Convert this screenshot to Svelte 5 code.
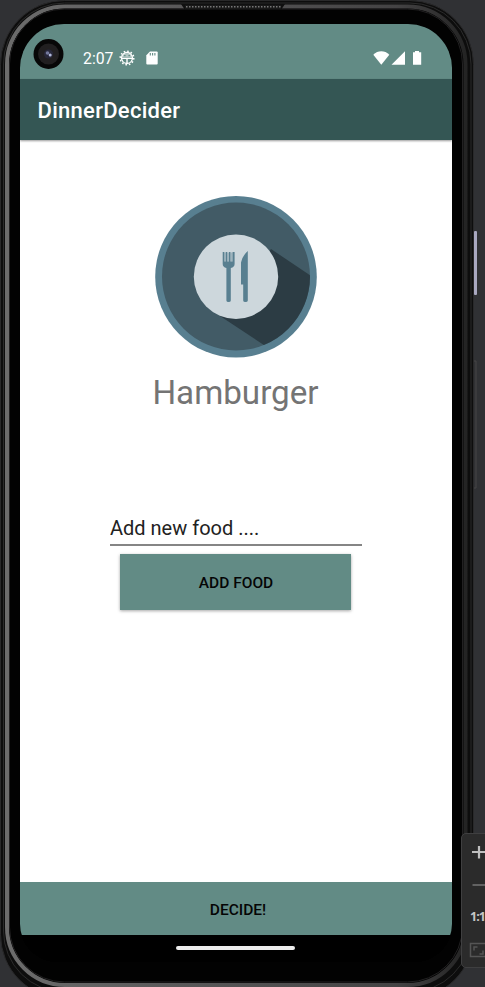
<script>
  const food = 'Hamburger';
  let entry = $state('Add new food ....');
</script>

<div class="stage">
  <svg class="frame" width="485" height="987" viewBox="0 0 485 987" aria-hidden="true">
    <defs>
      <linearGradient id="rim" x1="0" y1="0" x2="1" y2="0">
        <stop offset="0" stop-color="#6c6c6c" />
        <stop offset="0.35" stop-color="#5b5a5b" />
        <stop offset="0.85" stop-color="#444344" />
        <stop offset="1" stop-color="#242424" />
      </linearGradient>
      <pattern id="mesh" width="3" height="3" patternUnits="userSpaceOnUse">
        <rect width="3" height="3" fill="#191919" />
        <rect width="1.5" height="1.5" fill="#777" />
      </pattern>
    </defs>
    <rect x="0.5" y="0.5" width="473" height="998" rx="64" fill="#0d0d0d" stroke="#29292a" />
    <rect x="3.5" y="3" width="467.5" height="989" rx="61" fill="none" stroke="#2b2b2b" />
    <rect x="7" y="6.5" width="458.5" height="978.5" rx="58" fill="#030303" stroke="url(#rim)" stroke-width="4" />
    <rect x="9.5" y="9" width="453" height="973" rx="55" fill="#020202" stroke="#222122" />
    <path d="M181 4H285L281 10H185Z" fill="#101010" />
    <rect x="185" y="5" width="96" height="4" fill="url(#mesh)" />
    <rect x="474" y="231" width="3" height="64" rx="1" fill="#a9a8c0" />
    <path d="M474 361H476V488H474" fill="none" stroke="#474747" />
  </svg>

  <main class="screen">
    <header class="status">
      <span class="camera">
        <svg width="32" height="32" viewBox="0 0 32 32">
          <circle cx="16.5" cy="16" r="15" fill="#070707" />
          <circle cx="16.5" cy="16" r="10.5" fill="#211f20" />
          <circle cx="16.5" cy="16" r="4.5" fill="#28283a" />
          <circle cx="15.5" cy="15" r="1.8" fill="#74799c" />
          <circle cx="18.2" cy="17" r="1.5" fill="#b1b9db" />
        </svg>
      </span>
      <span class="clock">2:07</span>
      <svg class="bug" width="16" height="16" viewBox="0 0 16 16">
        <circle cx="8" cy="8" r="5.5" fill="none" stroke="#fff" stroke-width="1.3" />
        <circle cx="8" cy="8" r="6.8" fill="none" stroke="#fff" stroke-width="1.5" stroke-dasharray="1.6 1.96" />
        <path d="M3 7.4V5.6L5 3.5H11L13 5.6V7.4Z" fill="#fff" fill-opacity=".5" />
        <path d="M2.5 8.4H13.5M8 8V13.5" fill="none" stroke="#fff" stroke-width="1.4" />
        <path d="M5 5.7H6.6M9.4 5.7H11" stroke="#628b85" stroke-width="1.3" />
        <path d="M3.8 9.8H6.6V12.2H5.4ZM9.4 9.8H12.2L10.6 12.2H9.4Z" fill="#628b85" />
      </svg>
      <svg class="card" width="12" height="14" viewBox="0 0 12 14">
        <path d="M4 .5H10.7Q11.7 .5 11.7 1.5V12.5Q11.7 13.5 10.7 13.5H1.3Q.3 13.5 .3 12.5V4.2Z" fill="#fff" />
        <path d="M4.3 2V4.5M6.6 2V4.5M8.9 2V4.5" stroke="#628b85" stroke-width="1.1" />
      </svg>
      <span class="signals">
        <svg width="50" height="14" viewBox="0 0 50 14">
          <path d="M.3 3.8C4.8-.8 11.8-.8 16.3 3.8L8.3 13.8Z" fill="#fff" />
          <path d="M18.5 13.7L32 .3V13.7Z" fill="#fff" />
          <path d="M42 0H46V1.2H48.2V13.7H40V1.2H42Z" fill="#fff" />
        </svg>
      </span>
    </header>
    <div class="appbar">DinnerDecider</div>

    <section class="content">
      <svg class="logo" width="164" height="164" viewBox="0 0 164 164">
        <defs>
          <clipPath id="plate"><circle cx="82" cy="81.5" r="74" /></clipPath>
        </defs>
        <circle cx="82" cy="81.7" r="80.8" fill="#587f90" />
        <circle cx="82" cy="81.5" r="74" fill="#425b66" />
        <path d="M117 54L166 87V166H134L66 121Z" fill="#2c3c44" clip-path="url(#plate)" />
        <circle cx="82" cy="81.7" r="42.2" fill="#cdd7dc" />
        <path d="M68.7 57H70.3V66.5H71.8V57H73.2V66.5H75V57H76.4V66.5H78.6V57H80.6V69Q80.6 72 76.8 73V105.5Q76.8 107 74.6 107Q72.4 107 72.4 105.5V73Q68.7 72 68.7 69Z" fill="#587f90" />
        <path d="M70.3 57.5H71.8V66.5H70.3ZM73.2 57.5H75V66.5H73.2ZM76.4 57.5H78.6V66.5H76.4Z" fill="#587f90" fill-opacity=".4" />
        <path d="M93.8 56V105.5Q93.8 107 91.4 107Q89.2 107 89.2 105.5V89.5H87V67.5Q88.5 60.5 93.8 56Z" fill="#587f90" />
      </svg>
      <h1>{food}</h1>
      <input aria-label="New food" bind:value={entry} />
      <button class="add">ADD FOOD</button>
    </section>

    <button class="decide">DECIDE!</button>
    <footer><i></i></footer>
  </main>

  <aside class="tools">
    <svg width="23" height="132" viewBox="0 0 23 132">
      <path d="M10 18H23M17 12V24.5" stroke="#bfbfbf" stroke-width="2.2" />
      <path d="M10.5 51H23" stroke="#626262" stroke-width="2" />
      <rect x="8.5" y="109.5" width="22" height="13" fill="none" stroke="#555" stroke-width="1.5" />
      <path d="M12 116.5V113H15.5M17.5 120H21V116.5" fill="none" stroke="#555" stroke-width="1.5" />
    </svg>
    <span>1:1</span>
  </aside>
</div>

<style>
  :global(body) { margin: 0; background: #303134; }
  .stage {
    position: relative;
    width: 485px;
    height: 987px;
    overflow: hidden;
    background: #303134;
    font-family: Roboto, 'Liberation Sans', sans-serif;
  }
  .frame { position: absolute; inset: 0; }
  .screen {
    position: relative;
    display: flex;
    flex-direction: column;
    width: 432px;
    height: 938px;
    margin: 0 0 0 20px;
    top: 24px;
    border-radius: 44px 44px 38px 38px;
    overflow: hidden;
    background: #000;
  }
  .status {
    display: flex;
    align-items: center;
    height: 55px;
    flex: none;
    box-sizing: border-box;
    padding: 13px 29px 0 12px;
    background: #628b85;
    color: #fff;
  }
  .camera { height: 32px; margin-top: -9px; }
  .clock { margin-left: 19px; width: 36px; font-size: 15.8px; line-height: 20px; padding-top: 1px; }
  .bug { margin-left: 0; }
  .card { margin-left: 11px; }
  .signals { margin-left: auto; height: 14px; }
  .signals svg, .camera svg { display: block; }
  .appbar {
    position: relative;
    height: 61px;
    flex: none;
    box-sizing: border-box;
    padding: 2px 0 0 17.5px;
    line-height: 60px;
    font-size: 22px;
    font-weight: 500;
    letter-spacing: .28px;
    color: #fff;
    background: #345654;
    box-shadow: 0 1px 2px rgba(0, 0, 0, .4);
  }
  .content {
    display: flex;
    flex-direction: column;
    align-items: center;
    height: 742px;
    flex: none;
    background: #fff;
  }
  .logo { margin-top: 55px; flex: none; }
  h1 {
    margin: 13px 1px 0 0;
    font-size: 33.2px;
    font-weight: 400;
    line-height: 42px;
    color: #747474;
  }
  input {
    width: 252px;
    height: 36px;
    box-sizing: border-box;
    margin: 96px 0 0;
    padding: 2px 0 0;
    border: 0;
    border-bottom: 2px solid #858585;
    border-radius: 0;
    outline: 0;
    background: transparent;
    font: 400 20px/30px Roboto, sans-serif;
    color: #222;
  }
  button {
    border: 0;
    padding: 0;
    border-radius: 0;
    background: #628b85;
    color: #050505;
    font: 500 15.5px/20px Roboto, sans-serif;
  }
  .add {
    width: 231px;
    height: 56px;
    margin: 8px 1px 0 0;
    padding: 2px 0 0 1px;
    box-shadow: 0 1px 3px rgba(0, 0, 0, .35);
  }
  .decide { height: 53px; flex: none; padding: 2px 0 0 4px; }
  footer { flex: 1; background: #000; display: flex; justify-content: center; padding-right: 1px; }
  footer i { width: 119px; height: 4px; margin-top: 11px; border-radius: 2px; background: #ededed; }
  .tools {
    position: absolute;
    left: 461px;
    top: 833px;
    width: 30px;
    height: 133px;
    border: 1px solid #3f3f40;
    border-radius: 5px;
    background: #2b2b2b;
  }
  .tools svg { display: block; }
  .tools span {
    position: absolute;
    left: 8px;
    top: 73px;
    font: 700 12.5px/19px 'Open Sans', sans-serif;
    letter-spacing: -1px;
    color: #c6c6c6;
  }
</style>
